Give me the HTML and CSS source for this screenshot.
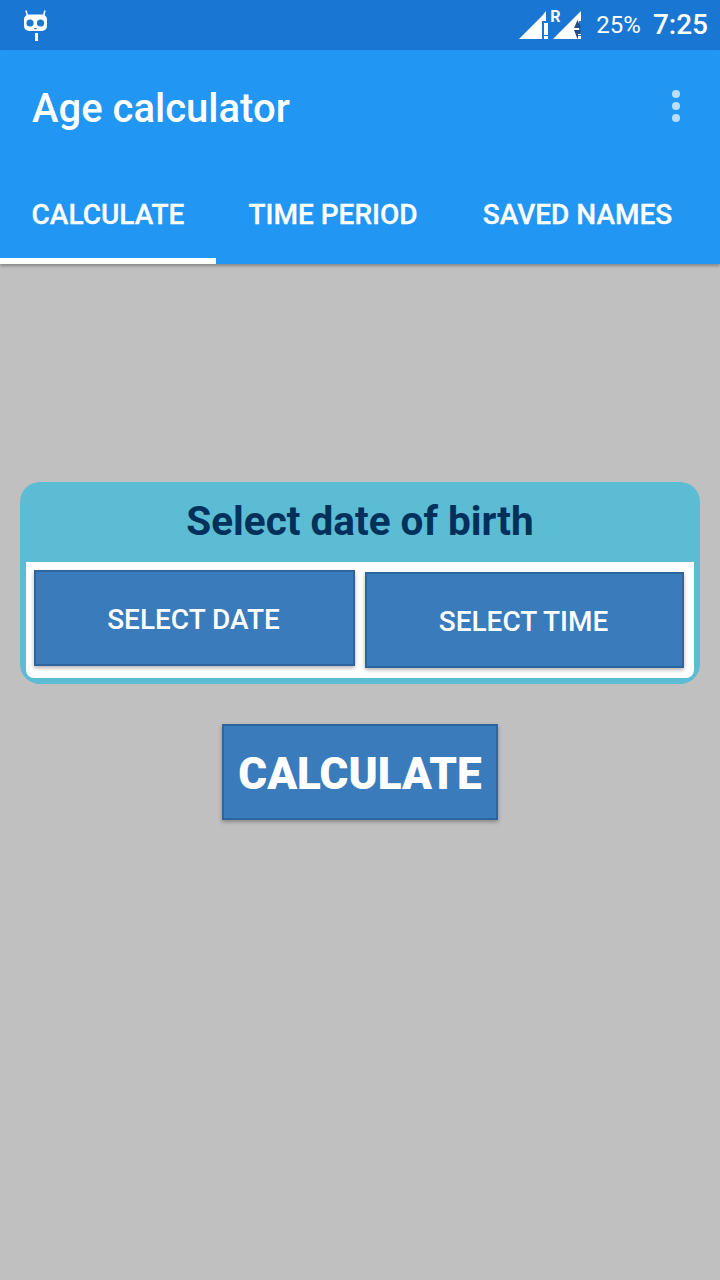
FILE: index.html
```html
<!DOCTYPE html>
<html lang="en">
<head>
<meta charset="utf-8">
<title>Age calculator</title>
<link rel="stylesheet" href="styles.css">
</head>
<body>
<div class="screen">
  <header class="status">
    <svg class="robot" width="28" height="32" viewBox="0 0 28 32" aria-hidden="true">
      <path d="M5.500 6 L4 0.500 M21.500 6 L23 0.500" stroke="#fff" stroke-width="1.500" fill="none"/>
      <path fill="#fff" fill-rule="evenodd" d="M7 4.500h13a5 5 0 0 1 5 5v6.500a5 5 0 0 1-5 5H7a5 5 0 0 1-5-5V9.500a5 5 0 0 1 5-5zM8 9.400a3.600 3.600 0 1 0 0 7.200 3.600 3.600 0 0 0 0-7.200zM18.500 9.400a3.600 3.600 0 1 0 0 7.200 3.600 3.600 0 0 0 0-7.200z"/>
      <rect x="13" y="23" width="3" height="8" fill="#fff"/>
      <ellipse cx="13.500" cy="18.500" rx="1.500" ry=".7" fill="#1976d2"/>
    </svg>
    <div class="status-right">
      <svg class="signal" width="64" height="30" viewBox="0 0 64 30" aria-hidden="true">
        <path fill="#fff" d="M0 29 L23 6 V29Z"/>
        <path fill="#fff" d="M23 6 L27 1 V11 H23Z"/>
        <rect x="25" y="13" width="4" height="12" fill="#fff"/>
        <rect x="25" y="26" width="4" height="3" fill="#fff"/>
        <path fill="#fff" d="M34 29 L62 1 V11 H60 V29Z"/>
        <path fill="#1f4f86" d="M58.500 10l3.500 8h-7zM58.500 29l-3.500-9h7z"/>
        <rect x="59" y="24" width="3" height="1" fill="#fff"/>
        <rect x="59" y="26" width="3" height="3" fill="#fff"/>
      </svg>
      <span class="roam">R</span>
      <span class="battery">25%</span>
      <span class="clock">7:25</span>
    </div>
  </header>
  <section class="appbar">
    <div class="toolbar">
      <h1 class="app-title">Age calculator</h1>
      <div class="overflow"><i></i><i></i><i></i></div>
    </div>
    <nav class="tabs">
      <span class="tab tab-active">CALCULATE</span>
      <span class="tab">TIME PERIOD</span>
      <span class="tab">SAVED NAMES</span>
    </nav>
  </section>
  <main class="content">
    <section class="card">
      <h2 class="card-title">Select date of birth</h2>
      <div class="card-body">
        <button class="btn btn-date">SELECT DATE</button>
        <button class="btn btn-time">SELECT TIME</button>
      </div>
    </section>
    <button class="btn btn-calc">CALCULATE</button>
  </main>
</div>
</body>
</html>
```
FILE: styles.css
```css
* { box-sizing: border-box; }
html, body { margin: 0; padding: 0; }
body { font-family: Roboto, "Noto Sans", sans-serif; background: #c0c0c0; }
.screen { width: 720px; height: 1280px; display: flex; flex-direction: column; overflow: hidden; }

.status { height: 50px; background: #1976d2; display: flex; align-items: center; justify-content: space-between; padding: 0 12px 0 22px; color: #fff; flex: none; }
.robot { display: block; margin-top: 2px; }
.status-right { display: flex; align-items: center; position: relative; }
.signal { display: block; margin-right: 13px; }
.roam { position: absolute; left: 31px; top: 9px; font-size: 16px; font-weight: 700; line-height: 16px; }
.battery { font-size: 24px; line-height: 50px; margin-right: 12px; }
.clock { font-size: 28px; font-weight: 500; line-height: 50px; }

.appbar { background: #2196f3; height: 214px; color: #fff; flex: none; display: flex; flex-direction: column; box-shadow: 0 2px 3px rgba(0,0,0,.3); position: relative; }
.toolbar { height: 118px; display: flex; align-items: flex-start; justify-content: space-between; padding: 0 40px 0 32px; }
.app-title { margin: 33px 0 0; font-size: 40px; line-height: 52px; font-weight: 500; }
.overflow { display: flex; flex-direction: column; gap: 4px; margin-top: 40px; }
.overflow i { display: block; width: 8px; height: 8px; border-radius: 50%; background: #b9defc; }
.tabs { display: grid; grid-template-columns: 216px 234px 255px; height: 96px; }
.tab { font-size: 28px; font-weight: 500; line-height: 94px; height: 96px; white-space: nowrap; text-align: center; -webkit-text-stroke: .3px #fff; }
.tab-active { border-bottom: 6px solid #fff; }

.content { flex: 1; display: flex; flex-direction: column; align-items: center; padding: 218px 20px 0; }
.card { width: 680px; height: 202px; background: #5bbcd4; border-radius: 20px; padding: 0 6px 6px; display: flex; flex-direction: column; }
.card-title { margin: 0; height: 80px; text-align: center; font-size: 40.500px; line-height: 79px; font-weight: 700; color: #01305a; }
.card-body { height: 116px; background: #fff; border-radius: 0 0 8px 8px; display: grid; grid-template-columns: 321px 319px; column-gap: 10px; padding: 8px 0 0 8px; align-items: start; }
.btn { display: block; font-family: inherit; color: #fff; background: #3a7bbb; border: 2px solid #2e659f; box-shadow: 0 2px 4px rgba(0,0,0,.3); padding: 4px 0 0; border-radius: 0; }
.btn-date, .btn-time { height: 96px; font-size: 28px; font-weight: 500; padding: 2px 2px 0 0; }
.btn-time { margin-top: 2px; }
.btn-calc { width: 276px; height: 96px; margin-top: 40px; font-size: 44px; font-weight: 900; }
```
